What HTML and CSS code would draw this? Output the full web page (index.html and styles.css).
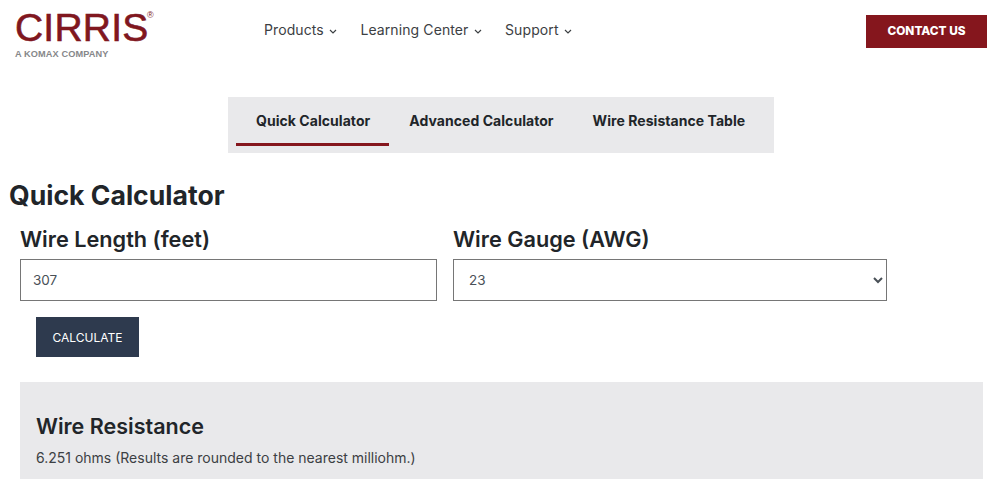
FILE: index.html
```html
<!DOCTYPE html>
<html lang="en">
<head>
  <meta charset="UTF-8" />
  <title>Wire Resistance Calculator</title>
  <link rel="stylesheet" href="styles.css">
</head>
<body>
  <header class="site-header">
    <a class="logo" href="#">
      <span class="logo-word">CIRRIS<sup class="logo-reg">®</sup></span>
      <span class="logo-sub">A KOMAX COMPANY</span>
    </a>
    <nav class="main-nav">
      <a href="#">Products <svg class="caret" viewBox="0 0 8 5"><path d="M1 1l3 3 3-3" /></svg></a>
      <a href="#">Learning Center <svg class="caret" viewBox="0 0 8 5"><path d="M1 1l3 3 3-3" /></svg></a>
      <a href="#">Support <svg class="caret" viewBox="0 0 8 5"><path d="M1 1l3 3 3-3" /></svg></a>
    </nav>
    <a class="contact-btn" href="#">CONTACT US</a>
  </header>

  <div class="tabs">
    <a class="tab active" href="#">Quick Calculator</a>
    <a class="tab" href="#">Advanced Calculator</a>
    <a class="tab" href="#">Wire Resistance Table</a>
  </div>

  <h1>Quick Calculator</h1>

  <div class="fields">
    <div class="field field-length">
      <label for="length">Wire Length (feet)</label>
      <input type="text" id="length" value="307" />
    </div>
    <div class="field field-gauge">
      <label for="gauge">Wire Gauge (AWG)</label>
      <select id="gauge">
        <option>23</option>
      </select>
    </div>
  </div>

  <button class="calc-btn">CALCULATE</button>

  <section class="result">
    <h2>Wire Resistance</h2>
    <p>6.251 ohms (Results are rounded to the nearest milliohm.)</p>
  </section>
</body>
</html>
```

FILE: styles.css
```css
html, body {
  height: 479px;
  overflow: hidden;
}
body {
  font-family: Inter, "Open Sans", sans-serif;
  color: #212529;
  background: #fff;
  margin: 0;
}
a {
  color: inherit;
  text-decoration: none;
}
.site-header {
  display: flex;
  align-items: flex-start;
  height: 97px;
  padding: 0 13px 0 15px;
  box-sizing: border-box;
}
.logo {
  display: flex;
  flex-direction: column;
  width: 249px;
  padding-top: 7px;
}
.logo-word {
  font-family: "Liberation Sans", sans-serif;
  font-size: 39px;
  line-height: 42px;
  letter-spacing: 0.2px;
  color: #80171f;
  -webkit-text-stroke: 0.6px #80171f;
  position: relative;
}
.logo-reg {
  position: absolute;
  left: 132px;
  top: 4px;
  font-size: 9px;
  line-height: 9px;
  letter-spacing: 0;
  -webkit-text-stroke: 0;
}
.logo-sub {
  font-family: "Liberation Sans", sans-serif;
  font-size: 9.2px;
  font-weight: bold;
  line-height: 10px;
  color: #86878a;
  letter-spacing: 0.1px;
}
.main-nav {
  display: flex;
  gap: 23.5px;
  padding-top: 21px;
  font-size: 14px;
  letter-spacing: 0.1px;
  line-height: 18px;
  color: #3c4043;
  flex: 1;
}
.caret {
  width: 8px;
  height: 5px;
  margin-left: 1px;
  vertical-align: 1px;
  fill: none;
  stroke: #3c4043;
  stroke-width: 1.2;
}
.contact-btn {
  background: #85161d;
  color: #fff;
  font-size: 11.8px;
  font-weight: 800;
  width: 121px;
  height: 33px;
  line-height: 33px;
  margin-top: 15px;
  text-align: center;
}
.tabs {
  display: flex;
  width: 546px;
  height: 56px;
  margin-left: 228px;
  padding-left: 8px;
  box-sizing: border-box;
  background: #e9e9eb;
}
.tab {
  font-size: 14px;
  letter-spacing: 0.05px;
  font-weight: 700;
  line-height: 48px;
  height: 46px;
  padding: 0 19px 0 20px;
  color: #212529;
  white-space: nowrap;
}
.tab.active {
  border-bottom: 3px solid #85161d;
}
h1 {
  font-size: 26.6px;
  font-weight: 700;
  line-height: 30px;
  margin: 27px 0 0 9px;
}
.fields {
  display: flex;
  gap: 16px;
  margin: 16px 0 0 20px;
}
.field label {
  display: block;
  font-size: 21.7px;
  font-weight: 600;
  line-height: 26px;
  margin-bottom: 7px;
}
.field-length {
  width: 417px;
}
.field-gauge {
  width: 434px;
}
input, select {
  display: block;
  width: 100%;
  height: 42px;
  box-sizing: border-box;
  font-family: inherit;
  font-size: 13.5px;
  color: #495057;
  background: #fff;
  border: 1px solid #767676;
  border-radius: 0;
  padding: 0 12px;
}
select {
  padding: 0 11px;
}
.calc-btn {
  display: block;
  width: 103px;
  height: 40px;
  margin: 16px 0 0 36px;
  background: #2e3a4e;
  color: #fff;
  font-family: inherit;
  font-size: 12px;
  border: none;
  padding: 0;
}
.result {
  height: 97px;
  margin: 25px 17px 0 20px;
  padding: 31px 16px 0;
  box-sizing: border-box;
  background: #e9e9eb;
}
.result h2 {
  font-size: 21.5px;
  font-weight: 600;
  line-height: 26px;
  margin: 0;
}
.result p {
  font-size: 14px;
  line-height: 18px;
  margin: 10px 0 0;
  color: #3c4043;
}
```
